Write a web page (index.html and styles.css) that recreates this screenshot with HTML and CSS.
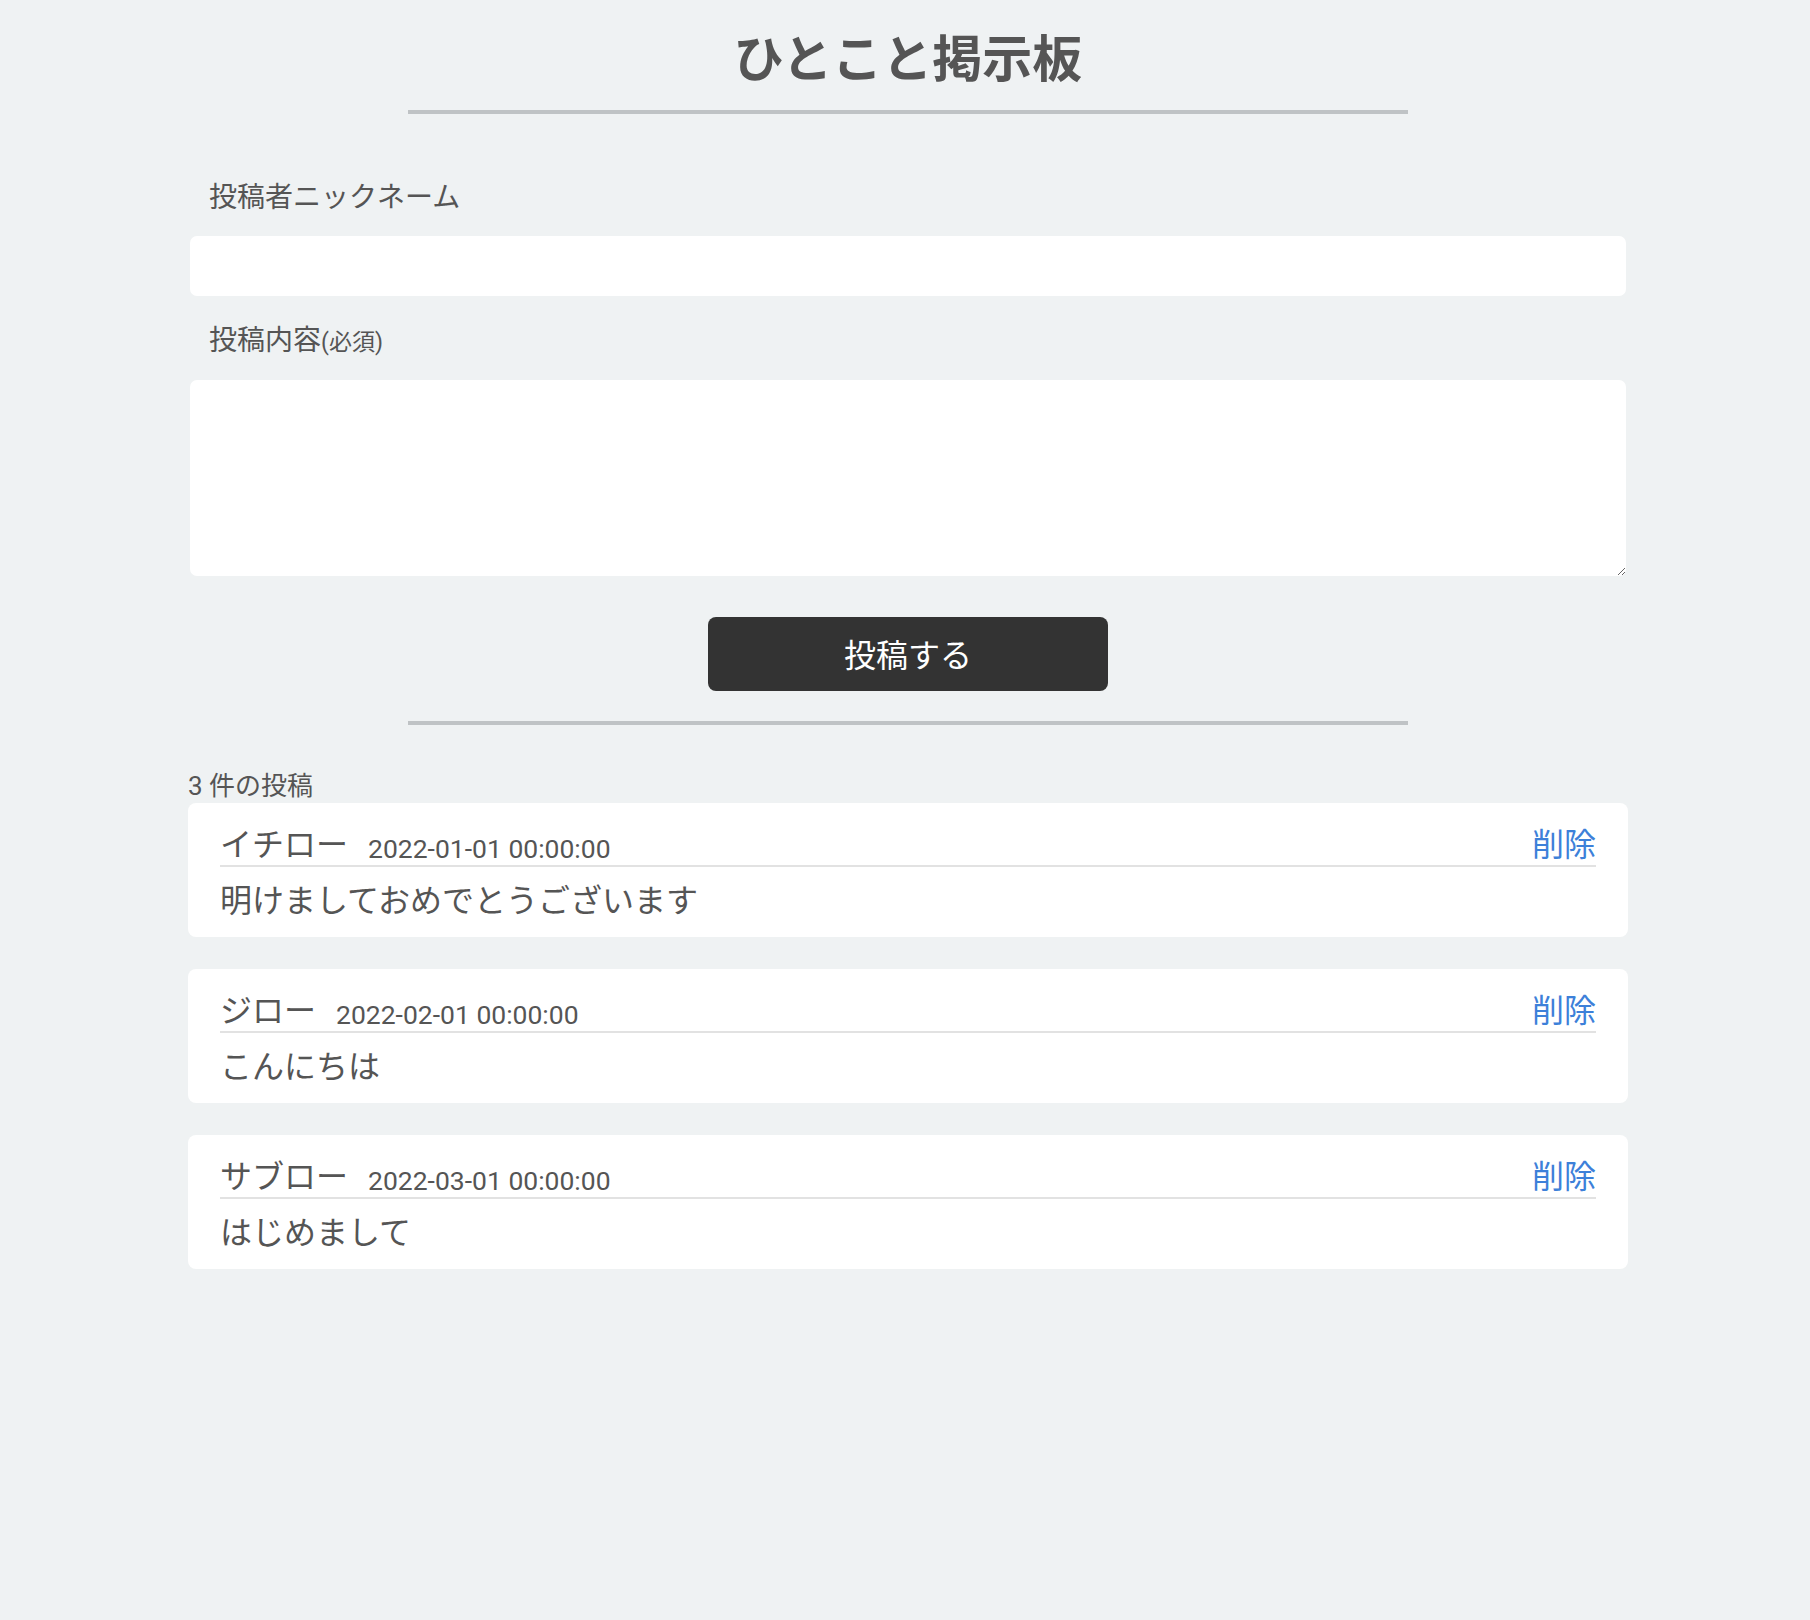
FILE: index.html
```html
<!DOCTYPE html>
<html lang="ja">
<head>
<meta charset="utf-8">
<title>ひとこと掲示板</title>
<link rel="stylesheet" href="styles.css">
</head>
<body>
<div class="page">
  <header class="site-header">
    <h1 class="title">ひとこと掲示板</h1>
    <div class="divider"></div>
  </header>

  <form class="post-form">
    <label class="field-label" for="nickname">投稿者ニックネーム</label>
    <input class="text-input" id="nickname" type="text">
    <label class="field-label label-second" for="message">投稿内容<span class="required">(必須)</span></label>
    <textarea class="text-area" id="message"></textarea>
    <button class="submit-btn" type="button">投稿する</button>
  </form>

  <div class="divider divider-second"></div>

  <section class="posts">
    <p class="post-count">3 件の投稿</p>

    <article class="post-card">
      <div class="post-head">
        <span class="post-name">イチロー</span>
        <span class="post-date">2022-01-01 00:00:00</span>
        <a class="post-delete" href="#">削除</a>
      </div>
      <p class="post-body">明けましておめでとうございます</p>
    </article>

    <article class="post-card">
      <div class="post-head">
        <span class="post-name">ジロー</span>
        <span class="post-date">2022-02-01 00:00:00</span>
        <a class="post-delete" href="#">削除</a>
      </div>
      <p class="post-body">こんにちは</p>
    </article>

    <article class="post-card">
      <div class="post-head">
        <span class="post-name">サブロー</span>
        <span class="post-date">2022-03-01 00:00:00</span>
        <a class="post-delete" href="#">削除</a>
      </div>
      <p class="post-body">はじめまして</p>
    </article>
  </section>
</div>
</body>
</html>
```

FILE: styles.css
```css
html, body {
  margin: 0;
  padding: 0;
}

body {
  background: #eff2f3;
  color: #555555;
  font-family: Roboto, "Noto Sans CJK JP", "Noto Sans", sans-serif;
  padding-left: 6px;
  min-height: 1620px;
  box-sizing: border-box;
}

.page {
  width: 1440px;
  margin: 0 auto;
  display: flex;
  flex-direction: column;
}

.site-header {
  padding-top: 22px;
  display: flex;
  flex-direction: column;
  align-items: center;
}

.title {
  margin: 0;
  font-size: 50px;
  line-height: 76px;
  font-weight: 700;
  color: #555555;
}

.divider {
  width: 1000px;
  height: 4px;
  background: #bfc3c5;
  margin: 12px auto 0;
}

.post-form {
  display: flex;
  flex-direction: column;
  margin-top: 63px;
}

.field-label {
  font-size: 28px;
  line-height: 42px;
  padding-left: 21px;
  margin-bottom: 17px;
}

.label-second {
  margin-bottom: 16px;
}

.required {
  font-size: 23px;
}

.text-input,
.text-area {
  display: block;
  margin: 0 2px;
  border: none;
  background: #ffffff;
  border-radius: 7px;
  font-family: inherit;
  font-size: 24px;
  color: #555555;
  padding: 0 16px;
  box-sizing: border-box;
  outline: none;
}

.text-input {
  height: 60px;
  margin-bottom: 24px;
}

.text-area {
  height: 196px;
  padding: 12px 16px;
}

.submit-btn {
  align-self: center;
  width: 400px;
  height: 74px;
  margin-top: 41px;
  padding: 0 0 3px;
  border: none;
  border-radius: 8px;
  background: #333333;
  color: #ffffff;
  font-family: inherit;
  font-size: 32px;
  cursor: pointer;
}

.divider-second {
  margin-top: 30px;
}

.posts {
  display: flex;
  flex-direction: column;
  margin-top: 44px;
}

.post-count {
  margin: 0;
  font-size: 26px;
  line-height: 34px;
}

.post-card {
  background: #ffffff;
  border-radius: 8px;
  padding: 24px 32px 11px;
  margin-bottom: 32px;
  height: 134px;
  box-sizing: border-box;
}

.post-head {
  display: flex;
  align-items: baseline;
  border-bottom: 2px solid #e2e2e2;
  height: 38px;
}

.post-name {
  font-size: 32px;
  line-height: 36px;
}

.post-date {
  align-self: flex-end;
  font-size: 26.5px;
  line-height: 32px;
  margin-left: 20px;
}

.post-delete {
  margin-left: auto;
  font-size: 32px;
  line-height: 36px;
  color: #3d80d9;
  text-decoration: none;
}

.post-body {
  margin: 10px 0 0;
  font-size: 32px;
  line-height: 48px;
}
```
